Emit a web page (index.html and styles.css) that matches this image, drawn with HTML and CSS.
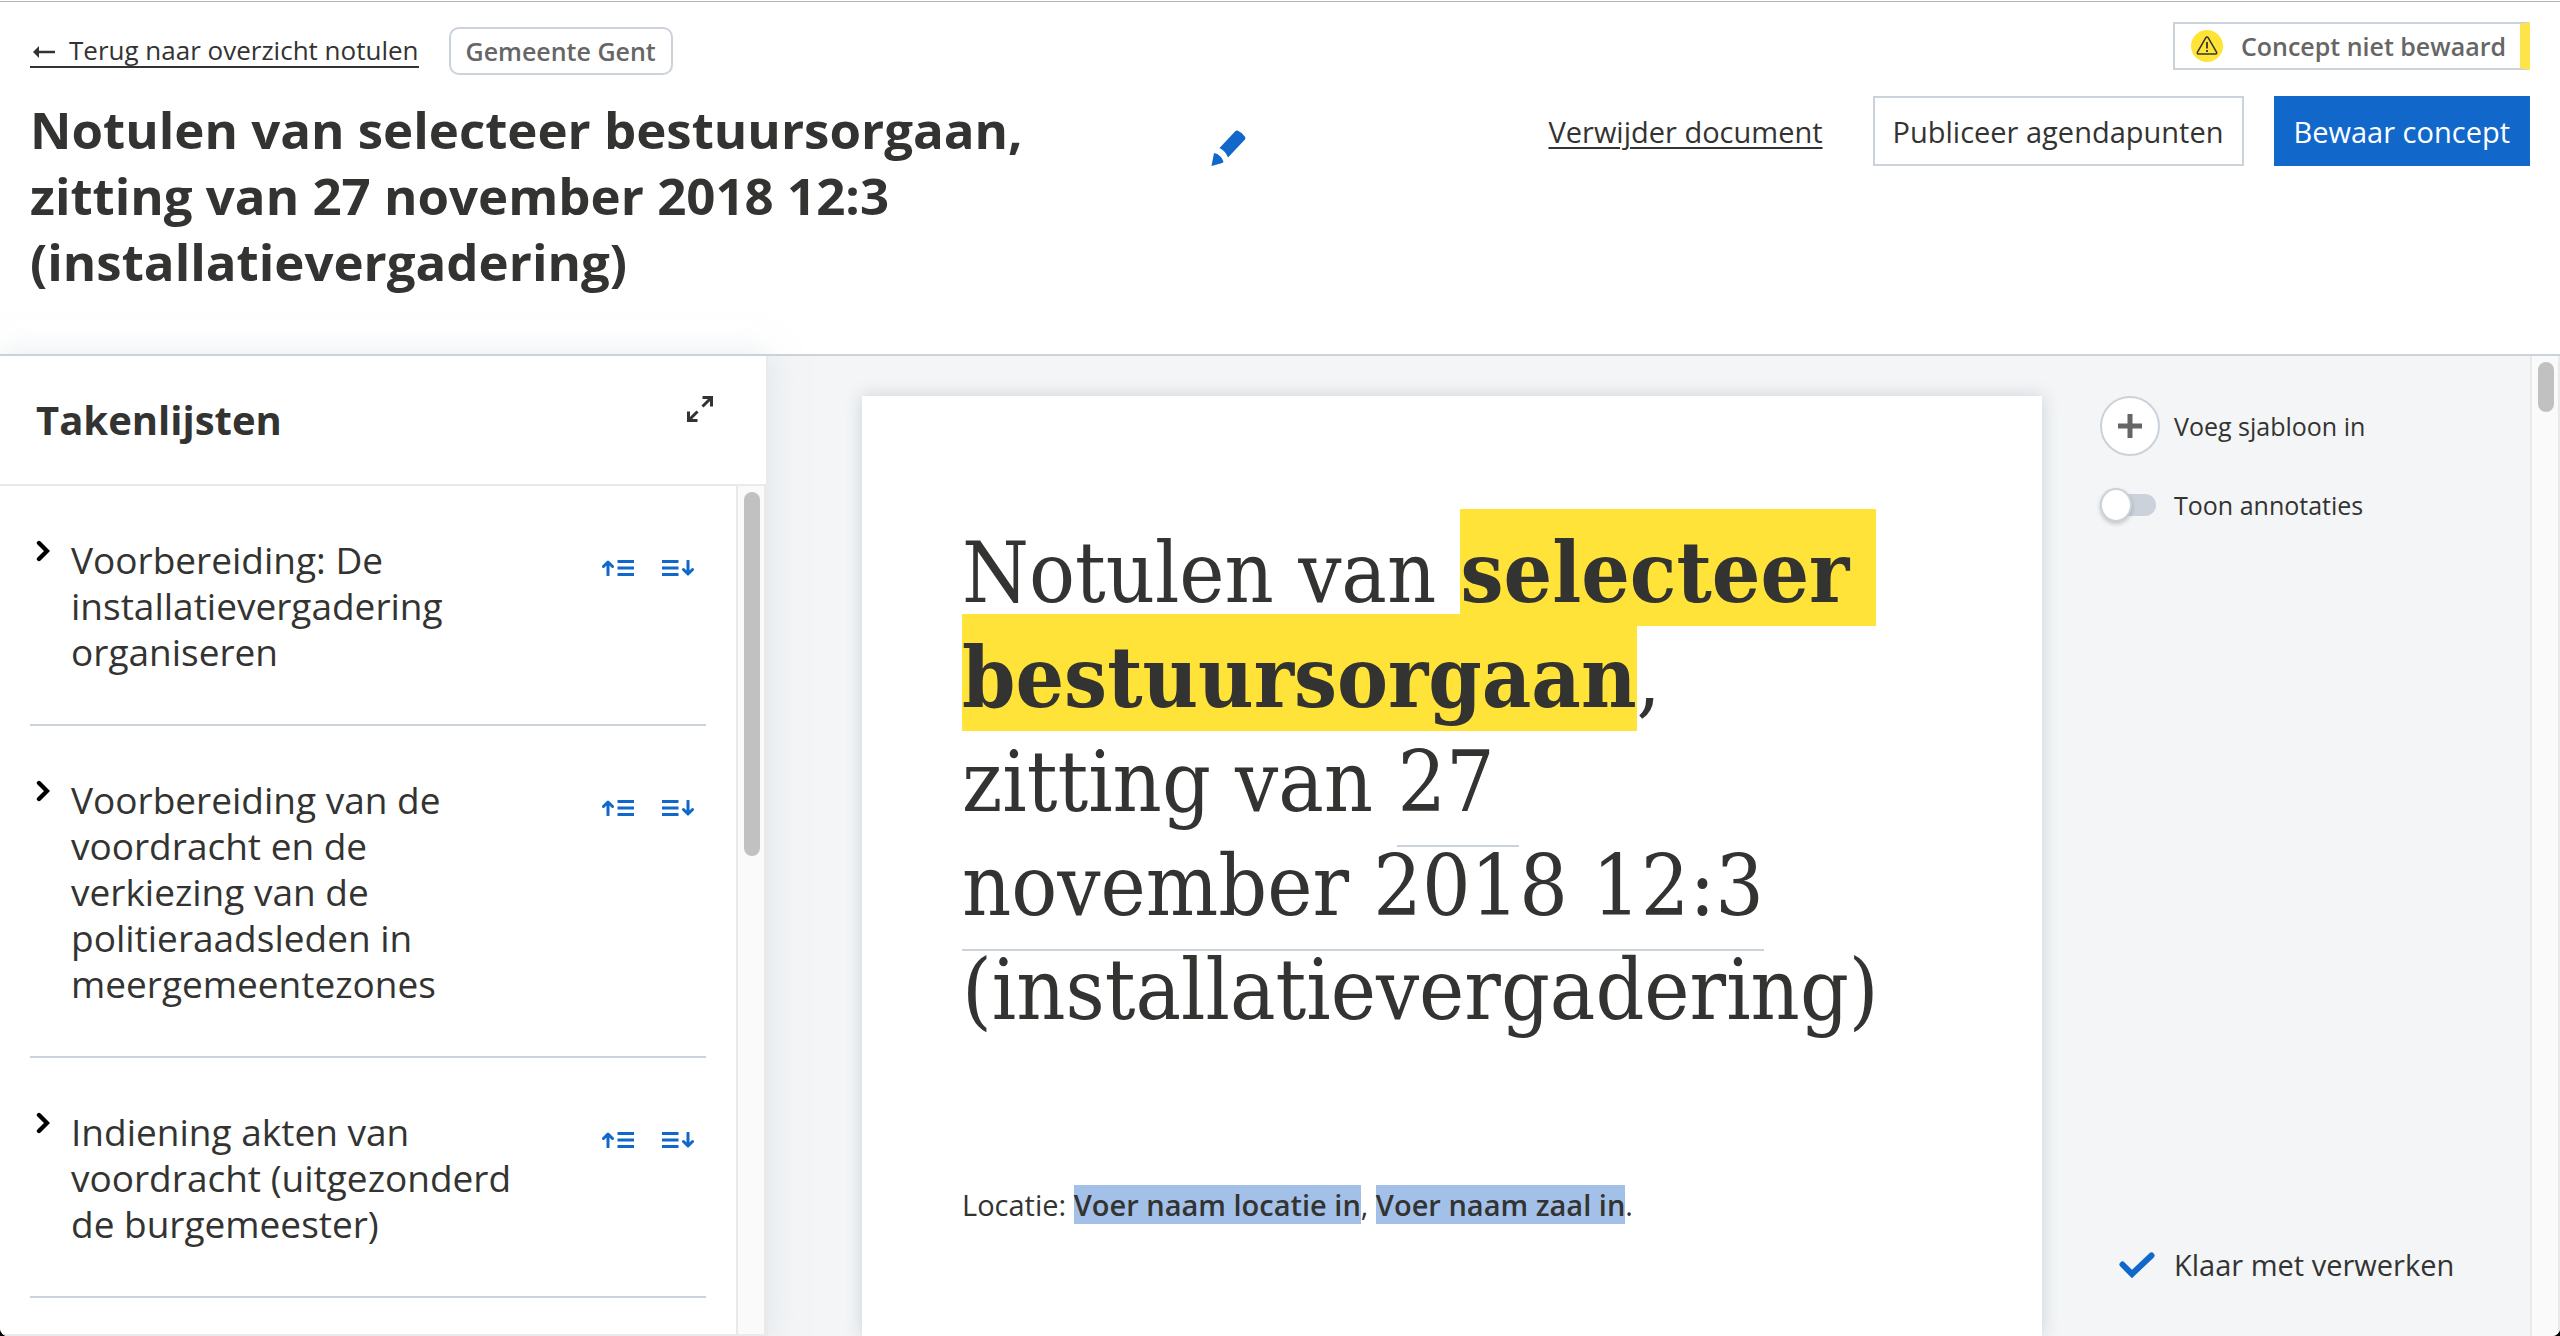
FILE: index.html
```html
<!DOCTYPE html>
<html lang="nl">
<head>
<meta charset="utf-8">
<title>Notulen bewerken</title>
<link rel="stylesheet" href="styles.css">
</head>
<body>
<svg class="sprite" aria-hidden="true">
  <symbol id="chevron" viewBox="0 0 14 22"><path d="M3 3l8 8-8 8" fill="none" stroke="currentColor" stroke-width="4.400" stroke-linecap="round" stroke-linejoin="miter"/></symbol>
  <symbol id="insert-above" viewBox="0 0 32 16"><path d="M6 15V3M1.500 6.500L6 2l4.500 4.500" fill="none" stroke="currentColor" stroke-width="3" stroke-linecap="round" stroke-linejoin="round"/><path d="M15.500 0H32v3H15.500zM15.500 6.500H32v3H15.500zM15.500 13H32v3H15.500z" fill="currentColor"/></symbol>
  <symbol id="insert-below" viewBox="0 0 32 16"><path d="M26 1v12M21.500 9.500L26 14l4.500-4.500" fill="none" stroke="currentColor" stroke-width="3" stroke-linecap="round" stroke-linejoin="round"/><path d="M0 0h16.500v3H0zM0 6.500h16.500v3H0zM0 13h16.500v3H0z" fill="currentColor"/></symbol>
</svg>
<div class="app">
  <header class="header">
    <div class="header-main">
      <div class="crumbs">
        <a class="link back" href="#"><svg class="back-arrow" viewBox="0 0 24 14" aria-hidden="true"><path d="M1 7l6-6v12z" fill="currentColor"/><path d="M5 7h18" stroke="currentColor" stroke-width="2.500"/></svg>Terug naar overzicht notulen</a>
        <span class="badge">Gemeente Gent</span>
      </div>
      <div class="title-row">
        <h1 class="title">Notulen van selecteer bestuursorgaan, zitting van 27 november 2018 12:3 (installatievergadering)</h1>
        <button class="icon-button edit" type="button" aria-label="Titel bewerken"><svg width="38" height="38" viewBox="0 0 38 38" aria-hidden="true"><path d="M9.500 19L25 2.500q1.500-1.500 3-.7 4.500 2 7 6 1 1.700-.3 3L18 28.500q-2.500-6.500-8.500-9.500z" fill="currentColor"/><path d="M4 24q7 1.500 9.500 8.500-.5 1.500-2 1.800L1.500 37z" fill="currentColor"/></svg></button>
      </div>
    </div>
    <div class="header-side">
      <p class="status"><svg width="32" height="32" viewBox="0 0 32 32" aria-hidden="true"><circle cx="16" cy="16" r="16" fill="#ffe337"/><path d="M16 7q.8 0 1.300 1l8.200 14q.8 2-1 2h-17q-1.800 0-1-2l8.200-14q.5-1 1.300-1z" fill="none" stroke="#333" stroke-width="1.500"/><path d="M16 12v6.500M16 20v2" stroke="#333" stroke-width="1.800"/></svg>Concept niet bewaard</p>
      <div class="actions">
        <a class="link" href="#">Verwijder document</a>
        <button class="button secondary" type="button">Publiceer agendapunten</button>
        <button class="button primary" type="button">Bewaar concept</button>
      </div>
    </div>
  </header>
  <main class="main">
    <aside class="sidebar">
      <div class="sidebar-head">
        <h2 class="sidebar-title">Takenlijsten</h2>
        <button class="icon-button expand" type="button" aria-label="Vergroten"><svg width="28" height="28" viewBox="0 0 28 28" fill="none" stroke="currentColor" stroke-width="3" aria-hidden="true"><path d="M16.500 2.500h9v9M25 3l-8.500 8.500M11.500 25.500h-9v-9M3 25l8.500-8.500"/></svg></button>
      </div>
      <div class="sidebar-body">
        <ul class="tasks">
          <li class="task">
            <button class="icon-button toggle" type="button" aria-label="Openen"><svg width="14" height="22"><use href="#chevron"/></svg></button>
            <span class="task-name">Voorbereiding: De installatievergadering organiseren</span>
            <button class="icon-button" type="button" aria-label="Bovenaan invoegen"><svg width="32" height="16"><use href="#insert-above"/></svg></button>
            <button class="icon-button" type="button" aria-label="Onderaan invoegen"><svg width="32" height="16"><use href="#insert-below"/></svg></button>
          </li>
          <li class="task">
            <button class="icon-button toggle" type="button" aria-label="Openen"><svg width="14" height="22"><use href="#chevron"/></svg></button>
            <span class="task-name">Voorbereiding van de voordracht en de verkiezing van de politieraadsleden in meergemeentezones</span>
            <button class="icon-button" type="button" aria-label="Bovenaan invoegen"><svg width="32" height="16"><use href="#insert-above"/></svg></button>
            <button class="icon-button" type="button" aria-label="Onderaan invoegen"><svg width="32" height="16"><use href="#insert-below"/></svg></button>
          </li>
          <li class="task">
            <button class="icon-button toggle" type="button" aria-label="Openen"><svg width="14" height="22"><use href="#chevron"/></svg></button>
            <span class="task-name">Indiening akten van voordracht (uitgezonderd de burgemeester)</span>
            <button class="icon-button" type="button" aria-label="Bovenaan invoegen"><svg width="32" height="16"><use href="#insert-above"/></svg></button>
            <button class="icon-button" type="button" aria-label="Onderaan invoegen"><svg width="32" height="16"><use href="#insert-below"/></svg></button>
          </li>
        </ul>
        <div class="scrollbar"><div class="thumb thumb-tasks"></div></div>
      </div>
    </aside>
    <section class="workspace">
      <article class="paper">
        <h2 class="doc-title">Notulen van <mark class="todo">selecteer&nbsp;<br>bestuursorgaan</mark>,<br>zitting van <span class="date">27&nbsp;<br>november 2018 12:3</span><br>(installatievergadering)</h2>
        <p class="doc-text">Locatie: <mark class="field">Voer naam locatie in</mark>, <mark class="field">Voer naam zaal in</mark>.</p>
      </article>
      <div class="tools">
        <button class="tool" type="button"><span class="plus"><svg width="24" height="24" viewBox="0 0 24 24" aria-hidden="true"><path d="M12 0v24M0 12h24" stroke="currentColor" stroke-width="5"/></svg></span>Voeg sjabloon in</button>
        <label class="tool" for="annotations"><input class="switch" type="checkbox" id="annotations">Toon annotaties</label>
        <button class="tool done" type="button"><svg class="check" width="38" height="28" viewBox="0 0 38 28" aria-hidden="true"><path d="M4.500 13.500l9.500 9.500L33.500 4.500" fill="none" stroke="currentColor" stroke-width="6" stroke-linecap="round"/></svg>Klaar met verwerken</button>
      </div>
    </section>
    <div class="scrollbar"><div class="thumb thumb-page"></div></div>
  </main>
</div>
</body>
</html>
```
FILE: styles.css
```css
* { box-sizing: border-box; }

body {
  margin: 0;
  background: #000;
  color: #333332;
  font-family: "Open Sans", "Noto Sans", sans-serif;
  font-size: 29px;
}

h1, h2, p, ul { margin: 0; padding: 0; }

button {
  font: inherit;
  color: inherit;
  cursor: pointer;
}

svg { display: block; flex: none; }

.sprite { display: none; }

.app {
  display: flex;
  flex-direction: column;
  height: 100vh;
  padding-top: 1px;
  overflow: hidden;
  background: #fff;
  border-radius: 0 0 8px 8px;
}

.link {
  color: inherit;
  text-decoration: underline;
  text-decoration-thickness: 2px;
  text-underline-offset: 4px;
}

.icon-button {
  flex: none;
  padding: 0;
  border: 0;
  background: none;
  color: #1168ca;
}

/* Header */

.header {
  display: flex;
  justify-content: space-between;
  padding: 0 30px 60px;
  border-top: 1px solid #b2b4b4;
  border-bottom: 2px solid #cbd2da;
}

.header-main { flex: 1; padding-top: 25px; }

.crumbs {
  display: flex;
  align-items: center;
  gap: 30px;
  font-size: 26px;
}

.back {
  display: flex;
  align-items: center;
  line-height: 32px;
  border-bottom: 2px solid currentColor;
  text-decoration: none;
}

.back-arrow { width: 24px; height: 14px; margin: 4px 13px 0 2px; }

.badge {
  padding: 0 15px;
  border: 2px solid #cbd2da;
  border-radius: 10px;
  color: #666;
  font-size: 25px;
  font-weight: 600;
  line-height: 44px;
}

.title-row { display: flex; gap: 30px; padding-top: 21px; }

.title {
  width: 1150px;
  max-width: 80%;
  font-size: 51px;
  font-weight: 700;
  line-height: 66px;
}

.edit { align-self: flex-start; padding-top: 33px; }

.header-side {
  display: flex;
  flex-direction: column;
  align-items: flex-end;
  gap: 26px;
  padding-top: 20px;
}

.status {
  display: flex;
  align-items: center;
  gap: 18px;
  height: 48px;
  padding: 0 14px 0 16px;
  border: 2px solid #cbd2da;
  border-right: 10px solid #ffe34a;
  color: #666;
  font-size: 25px;
  font-weight: 600;
}

.actions { display: flex; align-items: center; }

.button {
  height: 70px;
  margin-left: 30px;
  padding: 0 18px;
  border: 2px solid #cbd2da;
  background: #fff;
}

.secondary { margin-left: 50px; }

.primary { border-color: #1168ca; background: #1168ca; color: #fff; }

/* Body */

.main { display: flex; flex: 1; min-height: 0; }

.sidebar {
  display: flex;
  flex: none;
  flex-direction: column;
  width: 30%;
  border-right: 2px solid #e8ebee;
  border-bottom: 2px solid #e8ebee;
  background: #fff;
  box-shadow: 0 0 30px #cbd2da80;
  z-index: 1;
}

.sidebar-head {
  display: flex;
  justify-content: space-between;
  height: 130px;
  padding: 39px 52px 0 36px;
  border-bottom: 2px solid #e8ebee;
}

.sidebar-title { font-size: 40px; font-weight: 700; line-height: 50px; }

.expand { align-self: flex-start; color: #333332; }

.sidebar-body { display: flex; flex: 1; min-height: 0; }

.tasks {
  flex: 1;
  min-width: 0;
  padding: 0 30px;
  list-style: none;
}

.task {
  display: flex;
  align-items: flex-start;
  gap: 28px;
  padding: 51px 12px 49px 6px;
  border-bottom: 2px solid #cbd2da;
}

.task .icon-button { padding-top: 23px; }

.task .toggle { margin-right: -7px; padding-top: 3px; color: #000; }

.task-name { flex: 1; margin-right: 28px; font-size: 37px; line-height: 46px; }

.scrollbar {
  flex: none;
  width: 30px;
  padding: 6px;
  border: solid #e9e9e9;
  border-width: 0 2px;
  background: #fafafa;
}

.thumb { width: 16px; border-radius: 8px; background: #c1c1c1; }

.thumb-tasks { height: 364px; }

.thumb-page { height: 50px; }

.workspace {
  display: flex;
  flex: 1;
  min-width: 0;
  gap: 58px;
  padding: 40px 0 0 94px;
  background: #f3f5f6;
}

.paper {
  flex: 1;
  padding: 124px 100px 0;
  background: #fff;
  box-shadow: 0 0 16px #cbd2da;
}

.doc-title {
  font-family: "DejaVu Serif Condensed", "DejaVu Serif", serif;
  font-size: 85px;
  font-weight: 400;
  line-height: 104px;
  white-space: nowrap;
}

.todo {
  padding: 13px 0 4px;
  background: #ffe339;
  color: inherit;
  font-weight: 700;
}

.date { padding-bottom: 14px; border-bottom: 2px solid #cbd2da; }

.doc-text { margin-top: 142px; line-height: 42px; }

.field { background: #a3c1e8; color: inherit; font-weight: 600; }

.tools {
  display: flex;
  flex: none;
  flex-direction: column;
  align-items: flex-start;
  gap: 28px;
  width: 430px;
}

.tool {
  display: flex;
  align-items: center;
  gap: 14px;
  padding: 0;
  border: 0;
  background: none;
  font-size: 25px;
  line-height: 42px;
}

.plus {
  display: grid;
  place-items: center;
  width: 60px;
  height: 60px;
  border: 2px solid #cbd2da;
  border-radius: 50%;
  background: #fff;
  color: #666;
}

.switch {
  display: flex;
  align-items: center;
  width: 56px;
  height: 22px;
  margin: 0 4px 0 0;
  appearance: none;
  border-radius: 11px;
  background: #cbd2da;
}

.switch::before {
  content: "";
  width: 28px;
  height: 30px;
  flex: none;
  border: 2px solid #cbd2da;
  border-radius: 50%;
  background: #fff;
  box-shadow: 0 2px 4px #0003;
}

.done { margin: auto 0 50px 18px; gap: 18px; font-size: 29px; }

.check { color: #1168ca; }
```
